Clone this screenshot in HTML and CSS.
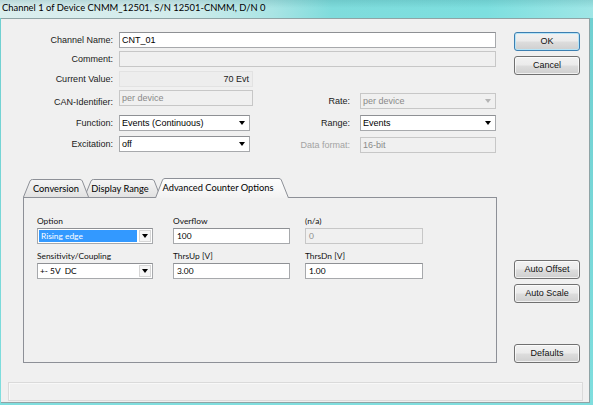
FILE: index.html
```html
<!DOCTYPE html>
<html>
<head>
<meta charset="utf-8">
<link rel="stylesheet" href="styles.css">
</head>
<body>
<div class="window">
  <div class="titlebar">Channel 1 of Device CNMM_12501, S/N 12501-CNMM, D/N 0</div>
  <div class="client">
    <div class="upper">
      <div class="main">
        <div class="form">
          <div class="lbl c1">Channel Name:</div>
          <div class="edit span3">CNT_01</div>

          <div class="lbl c1">Comment:</div>
          <div class="edit span3 dis"></div>

          <div class="lbl c1">Current Value:</div>
          <div class="edit ro w134">70 Evt</div>

          <div class="lbl c1 low">CAN-Identifier:</div>
          <div class="edit dis w134 grey">per device</div>
          <div class="lbl c3 mid">Rate:</div>
          <div class="combo dis mid w136"><span class="txt grey">per device</span><span class="btn"><i class="tri"></i></span></div>

          <div class="lbl c1">Function:</div>
          <div class="combo w131"><span class="txt">Events (Continuous)</span><span class="btn"><i class="tri"></i></span></div>
          <div class="lbl c3">Range:</div>
          <div class="combo w136"><span class="txt">Events</span><span class="btn"><i class="tri"></i></span></div>

          <div class="lbl c1">Excitation:</div>
          <div class="combo w131"><span class="txt">off</span><span class="btn"><i class="tri"></i></span></div>
          <div class="lbl c3 greylbl one">Data format:</div>
          <div class="edit dis w136 grey one">16-bit</div>
        </div>

        <div class="tabs">
          <div class="tabstrip">
            <div class="tab t1">
              <svg class="shape" viewBox="0 0 66 18" preserveAspectRatio="none">
                <defs><linearGradient id="ga" x1="0" y1="0" x2="0" y2="1"><stop offset="0" stop-color="#f6f6f6"/><stop offset="1" stop-color="#e2e2e2"/></linearGradient></defs>
                <path d="M0.5 18 L7 2 Q7.6 0.5 9.5 0.5 L57 0.5 Q58.6 0.5 59.3 2 L65.5 18" fill="url(#ga)" stroke="#8d9097"/>
              </svg>
              <span class="ttext">Conversion</span>
            </div>
            <div class="tab t2">
              <svg class="shape" viewBox="0 0 77 18" preserveAspectRatio="none">
                <defs><linearGradient id="gb" x1="0" y1="0" x2="0" y2="1"><stop offset="0" stop-color="#f6f6f6"/><stop offset="1" stop-color="#e2e2e2"/></linearGradient></defs>
                <path d="M0.5 18 L7 2 Q7.6 0.5 9.5 0.5 L68 0.5 Q69.6 0.5 70.3 2 L76.5 18" fill="url(#gb)" stroke="#8d9097"/>
              </svg>
              <span class="ttext">Display Range</span>
            </div>
            <div class="tab t3">
              <svg class="shape" viewBox="0 0 134 20" preserveAspectRatio="none">
                <defs><linearGradient id="gc" x1="0" y1="0" x2="0" y2="1"><stop offset="0" stop-color="#fdfdfd"/><stop offset="1" stop-color="#f2f2f2"/></linearGradient></defs>
                <path d="M0.5 20 L7.5 2 Q8.1 0.5 10 0.5 L124 0.5 Q125.6 0.5 126.3 2 L133.5 20" fill="url(#gc)" stroke="#8d9097"/>
              </svg>
              <span class="ttext">Advanced Counter Options</span>
            </div>
          </div>
          <div class="panel">
            <div class="pgrid">
              <div class="plbl">Option</div>
              <div class="plbl">Overflow</div>
              <div class="plbl">(n/a)</div>

              <div class="combo w116 pcombo"><span class="txt sel">Rising edge</span><span class="btn boxed"><i class="tri"></i></span></div>
              <div class="edit pedit w117">100</div>
              <div class="edit pedit dis w118 grey">0</div>

              <div class="plbl">Sensitivity/Coupling</div>
              <div class="plbl">ThrsUp [V]</div>
              <div class="plbl">ThrsDn [V]</div>

              <div class="combo w116 pcombo"><span class="txt">+- 5V  DC</span><span class="btn boxed"><i class="tri"></i></span></div>
              <div class="edit pedit w117">3.00</div>
              <div class="edit pedit w118">1.00</div>
            </div>
          </div>
        </div>
      </div>

      <div class="side">
        <div class="button default">OK</div>
        <div class="button gap5">Cancel</div>
        <div class="button offset">Auto Offset</div>
        <div class="button gap5">Auto Scale</div>
        <div class="button defaults">Defaults</div>
      </div>
    </div>
    <div class="status"></div>
  </div>
</div>
</body>
</html>
```

FILE: styles.css
```css
html, body {
  margin: 0;
  padding: 0;
}

body {
  width: 593px;
  height: 405px;
  overflow: hidden;
  background: linear-gradient(to bottom, #6fcfd0, #7fdede);
  font-family: "Liberation Sans", Arial, sans-serif;
  font-size: 9px;
  color: #000;
}

.window {
  display: flex;
  flex-direction: column;
  height: 405px;
}

.titlebar {
  height: 18px;
  line-height: 16px;
  padding-left: 2px;
  font-family: Lato, "Liberation Sans", sans-serif;
  font-size: 9.4px;
  color: #000;
  white-space: nowrap;
  background:
    linear-gradient(to bottom, rgba(40, 120, 125, 0.18), rgba(255, 255, 255, 0) 45%),
    linear-gradient(to right, #dbeeee 0%, #d2ecec 30%, #a9e4e4 46%, #7fdcdc 56%, #7ddfdf 82%, #9fe6e6 100%);
}

.client {
  flex: 1;
  margin: 0 3px 2px 1px;
  background: #f0f0f0;
  border: 1px solid #8fa3a5;
  border-left: none;
  display: flex;
  flex-direction: column;
}

.upper {
  display: flex;
}

.main {
  width: 496px;
  padding-top: 13px;
}

.side {
  width: 66px;
  margin-left: 17px;
  padding-top: 13px;
  display: flex;
  flex-direction: column;
}

/* ---------- top form ---------- */
.form {
  display: grid;
  grid-template-columns: 118px 134px 107px 136px;
  grid-template-rows: 19px 20px 19px 25px 21px 21px;
  align-items: start;
}

.lbl {
  line-height: 16px;
  text-align: right;
  padding-right: 6px;
  color: #1a1a1a;
  white-space: nowrap;
}

.c1 { grid-column: 1; }
.c3 { grid-column: 3; padding-right: 10px; }
.low { margin-top: 4px; }
.mid { margin-top: 3px; }
.one { margin-top: 1px; }
.greylbl { color: #a3a3a3; }

.edit {
  box-sizing: border-box;
  height: 16px;
  border: 1px solid #a7a9ac;
  border-top-color: #8e9094;
  background: #fff;
  line-height: 14px;
  padding-left: 2px;
  white-space: nowrap;
  overflow: hidden;
}

.span3 { grid-column: 2 / 5; }
.w116 { width: 116px; }
.w117 { width: 117px; }
.w118 { width: 118px; }
.w131 { width: 131px; }
.w134 { width: 134px; }
.w136 { width: 136px; }

.edit.dis {
  background: #f0f0f0;
  border-color: #c7c7c7;
}

.edit.ro {
  background: #ededed;
  border-color: #e2e2e2;
  text-align: right;
  padding-right: 3px;
  color: #222;
}

.grey { color: #8a8a8a; }

.combo {
  box-sizing: border-box;
  height: 16px;
  border: 1px solid #a7a9ac;
  border-top-color: #8e9094;
  background: #fff;
  display: flex;
}

.combo .txt {
  flex: 1;
  padding-left: 2px;
  line-height: 14px;
  white-space: pre;
  overflow: hidden;
}

.combo .btn {
  width: 14px;
  display: flex;
  align-items: center;
  justify-content: center;
}

.tri {
  display: block;
  width: 0;
  height: 0;
  border-left: 3.5px solid transparent;
  border-right: 3.5px solid transparent;
  border-top: 4px solid #000;
}

.combo.dis {
  background: #f0f0f0;
  border-color: #c7c7c7;
}

.combo.dis .tri { border-top-color: #b5b5b5; }

/* ---------- tabs ---------- */
.tabs {
  margin: 21px 0 0 22px;
  width: 474px;
}

.tabstrip {
  display: flex;
  align-items: flex-end;
  height: 19px;
  position: relative;
  z-index: 2;
}

.tab {
  position: relative;
  box-sizing: border-box;
  height: 18px;
  display: flex;
  align-items: center;
  justify-content: center;
  font-family: Lato, "Liberation Sans", sans-serif;
  font-size: 9.3px;
  color: #000;
  white-space: nowrap;
}

.shape {
  position: absolute;
  left: 0;
  top: 0;
  width: 100%;
  height: 100%;
  overflow: visible;
}

.ttext {
  position: relative;
  padding-top: 1px;
}

.t1 { width: 66px; z-index: 2; }
.t2 { width: 77px; margin-left: -5px; z-index: 1; padding-right: 5px; }
.t3 {
  width: 134px;
  height: 20px;
  margin-left: -6px;
  margin-bottom: -1px;
  z-index: 3;
  padding-bottom: 2px;
  padding-right: 8px;
}

.panel {
  box-sizing: border-box;
  height: 166px;
  border: 1px solid #8d9097;
  background: #f0f0f0;
  padding: 17px 0 0 13px;
}

.pgrid {
  display: grid;
  grid-template-columns: 136px 132px 118px;
  grid-template-rows: 13px 22px 13px 16px;
  align-items: start;
  font-family: Lato, "Liberation Sans", sans-serif;
  font-size: 8.4px;
}

.plbl {
  line-height: 13px;
  color: #111;
  white-space: nowrap;
}

.pedit {
  padding-left: 3px;
}

.pcombo .txt {
  padding-left: 0;
}

.pcombo .txt:not(.sel) { padding-left: 2px; }

.txt.sel {
  background: #3399ff;
  color: #fff;
  margin: 1px 0 1px 1px;
  line-height: 12px;
  padding-left: 2px;
}

.combo .btn.boxed {
  width: 12px;
  margin: 1px 1px 1px 2px;
  box-sizing: border-box;
  border: 1px solid #d6d6d6;
  background: #f6f6f6;
}

/* ---------- buttons ---------- */
.button {
  box-sizing: border-box;
  height: 19px;
  line-height: 17px;
  text-align: center;
  border: 1px solid #707070;
  border-radius: 3px;
  background: linear-gradient(to bottom, #f2f2f2 0%, #ebebeb 48%, #dddddd 52%, #cfcfcf 100%);
  box-shadow: inset 0 0 0 1px rgba(255, 255, 255, 0.7);
  color: #111;
}

.button.default {
  border-color: #3c7fb1;
  box-shadow: inset 0 0 0 1px #b6e4f7;
}

.gap5 { margin-top: 5px; }
.offset { margin-top: 185px; }
.defaults { margin-top: 41px; }

/* ---------- status ---------- */
.status {
  box-sizing: border-box;
  height: 19px;
  margin: 19px 6px 0 7px;
  border: 1px solid #dadada;
  box-shadow: inset 1px 1px 0 #f8f8f8;
}
```
